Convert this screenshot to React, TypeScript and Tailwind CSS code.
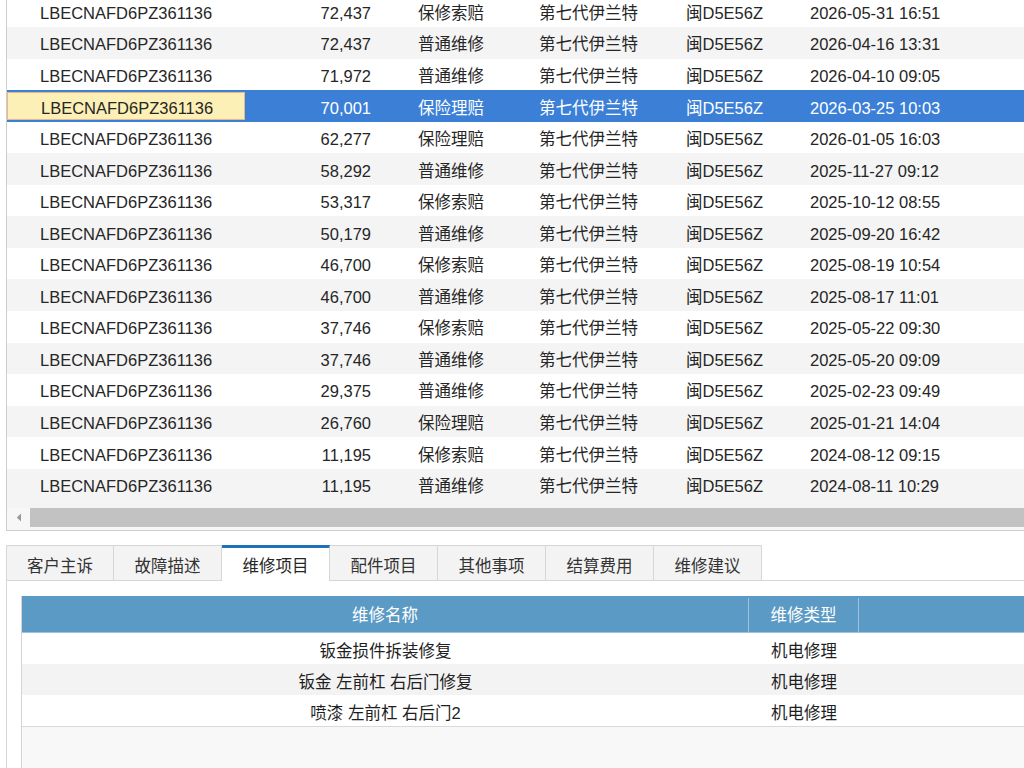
import React from 'react';

type Row = { km: string; kind: string; date: string };

const VIN = 'LBECNAFD6PZ361136';
const MODEL = '第七代伊兰特';
const PLATE = '闽D5E56Z';

const rows: Row[] = [
  { km: '72,437', kind: '保修索赔', date: '2026-05-31 16:51' },
  { km: '72,437', kind: '普通维修', date: '2026-04-16 13:31' },
  { km: '71,972', kind: '普通维修', date: '2026-04-10 09:05' },
  { km: '70,001', kind: '保险理赔', date: '2026-03-25 10:03' },
  { km: '62,277', kind: '保险理赔', date: '2026-01-05 16:03' },
  { km: '58,292', kind: '普通维修', date: '2025-11-27 09:12' },
  { km: '53,317', kind: '保修索赔', date: '2025-10-12 08:55' },
  { km: '50,179', kind: '普通维修', date: '2025-09-20 16:42' },
  { km: '46,700', kind: '保修索赔', date: '2025-08-19 10:54' },
  { km: '46,700', kind: '普通维修', date: '2025-08-17 11:01' },
  { km: '37,746', kind: '保修索赔', date: '2025-05-22 09:30' },
  { km: '37,746', kind: '普通维修', date: '2025-05-20 09:09' },
  { km: '29,375', kind: '普通维修', date: '2025-02-23 09:49' },
  { km: '26,760', kind: '保险理赔', date: '2025-01-21 14:04' },
  { km: '11,195', kind: '保修索赔', date: '2024-08-12 09:15' },
  { km: '11,195', kind: '普通维修', date: '2024-08-11 10:29' },
];

const SELECTED = 3;

const tabs = ['客户主诉', '故障描述', '维修项目', '配件项目', '其他事项', '结算费用', '维修建议'];
const ACTIVE_TAB = 2;

const items = [
  { name: '钣金损件拆装修复', type: '机电修理' },
  { name: '钣金 左前杠 右后门修复', type: '机电修理' },
  { name: '喷漆 左前杠 右后门2', type: '机电修理' },
];

function HistoryRow({ row, index }: { row: Row; index: number }) {
  const selected = index === SELECTED;
  const stripe = index % 2 === 1 ? 'bg-[#f4f4f4]' : 'bg-white';

  return (
    <div className={`flex h-[31.55px] shrink-0 items-center pt-[4px] ${selected ? 'bg-[#3b80d6] text-white' : `${stripe} text-[#262626]`}`}>
      <div
        className={`flex h-full w-[238px] shrink-0 items-center pl-[33px] ${
          selected ? 'mt-[-4px] h-[31.55px] border border-[#e6b98c] bg-[#fdf0b6] pt-[4px] pl-[32px] text-[#262626]' : ''
        }`}
      >
        {VIN}
      </div>
      <div className="w-[138px] shrink-0 pr-[12px] text-right">{row.km}</div>
      <div className="w-[144px] shrink-0 pl-[35px]">{row.kind}</div>
      <div className="w-[147px] shrink-0 pl-[12px]">{MODEL}</div>
      <div className="w-[124px] shrink-0 pl-[12px]">{PLATE}</div>
      <div className="flex-1 pl-[12px] whitespace-nowrap">{row.date}</div>
    </div>
  );
}

export default function App() {
  return (
    <div
      className="flex h-[768px] w-[1024px] flex-col overflow-hidden bg-white text-[16.5px]"
      style={{ fontFamily: '"Liberation Sans", "Noto Sans CJK SC", sans-serif' }}
    >
      {/* History grid */}
      <div className="ml-[6px] flex h-[531px] shrink-0 flex-col border-b border-l border-[#cdcdcd]">
        <div className="flex h-[508px] flex-col overflow-hidden bg-[#f4f4f4]">
          <div className="mt-[-4.5px] flex flex-col">
            {rows.map((r, i) => (
              <HistoryRow key={i} row={r} index={i} />
            ))}
          </div>
        </div>
        <div className="flex h-[22px] items-start bg-[#f7f7f7]">
          <div className="flex h-[19px] w-[23px] items-center justify-center">
            <svg width="6" height="9" viewBox="0 0 6 9">
              <path d="M5 0.5 L0.8 4.5 L5 8.5 Z" fill="#9a9a9a" />
            </svg>
          </div>
          <div className="h-[19px] flex-1 bg-[#c2c2c2]" />
        </div>
      </div>

      {/* Tabs */}
      <div className="mt-[14px] ml-[6px] flex h-[36px] shrink-0 items-end border-b border-[#d6d6d6]">
        {tabs.map((t, i) =>
          i === ACTIVE_TAB ? (
            <div
              key={t}
              className="mb-[-1px] flex h-[36px] w-[108px] items-center justify-center border-t-[3px] border-r border-t-[#1f72ba] border-r-[#d6d6d6] bg-white pt-[3px] text-[#262626]"
            >
              {t}
            </div>
          ) : (
            <div
              key={t}
              className={`flex h-[35px] w-[108px] items-center justify-center border-t border-r border-[#d6d6d6] bg-[#f3f3f3] pt-[6px] text-[#333] ${
                i === 0 ? 'border-l' : ''
              }`}
            >
              {t}
            </div>
          )
        )}
      </div>

      {/* Repair items panel */}
      <div className="ml-[6px] flex flex-1 flex-col border-l border-[#d6d6d6] pt-[15px] pl-[14px]">
        <div className="flex flex-1 flex-col border-l border-[#d3d3d3] bg-[#f8f8f8]">
          <div className="flex h-[37px] shrink-0 border-b border-[#9cc3de] bg-[#5b9ac4] pt-[2px] text-white">
            <div className="flex w-[727px] items-center justify-center border-r border-[#9cc3de]">维修名称</div>
            <div className="flex w-[110px] items-center justify-center border-r border-[#9cc3de]">维修类型</div>
            <div className="flex-1" />
          </div>
          <div className="flex flex-col border-b border-[#d9d9d9] text-[#1f1f1f]">
            {items.map((it, i) => (
              <div
                key={i}
                className={`flex h-[31px] items-center pt-[5px] ${i === 1 ? 'bg-[#f3f3f3]' : 'bg-white'}`}
              >
                <div className="w-[727px] text-center">{it.name}</div>
                <div className="w-[110px] text-center">{it.type}</div>
                <div className="flex-1" />
              </div>
            ))}
          </div>
        </div>
      </div>
    </div>
  );
}
